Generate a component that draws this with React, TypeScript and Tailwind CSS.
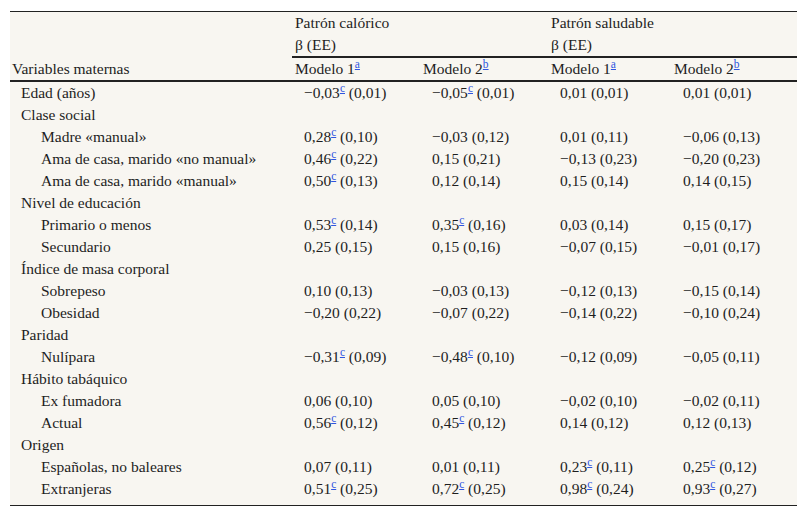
import React from "react";

type Row = { label: string; level: 0 | 1; vals?: string[] };

const rows: Row[] = [
  { label: "Edad (años)", level: 0, vals: ["−0,03^ (0,01)", "−0,05^ (0,01)", "0,01 (0,01)", "0,01 (0,01)"] },
  { label: "Clase social", level: 0 },
  { label: "Madre «manual»", level: 1, vals: ["0,28^ (0,10)", "−0,03 (0,12)", "0,01 (0,11)", "−0,06 (0,13)"] },
  { label: "Ama de casa, marido «no manual»", level: 1, vals: ["0,46^ (0,22)", "0,15 (0,21)", "−0,13 (0,23)", "−0,20 (0,23)"] },
  { label: "Ama de casa, marido «manual»", level: 1, vals: ["0,50^ (0,13)", "0,12 (0,14)", "0,15 (0,14)", "0,14 (0,15)"] },
  { label: "Nivel de educación", level: 0 },
  { label: "Primario o menos", level: 1, vals: ["0,53^ (0,14)", "0,35^ (0,16)", "0,03 (0,14)", "0,15 (0,17)"] },
  { label: "Secundario", level: 1, vals: ["0,25 (0,15)", "0,15 (0,16)", "−0,07 (0,15)", "−0,01 (0,17)"] },
  { label: "Índice de masa corporal", level: 0 },
  { label: "Sobrepeso", level: 1, vals: ["0,10 (0,13)", "−0,03 (0,13)", "−0,12 (0,13)", "−0,15 (0,14)"] },
  { label: "Obesidad", level: 1, vals: ["−0,20 (0,22)", "−0,07 (0,22)", "−0,14 (0,22)", "−0,10 (0,24)"] },
  { label: "Paridad", level: 0 },
  { label: "Nulípara", level: 1, vals: ["−0,31^ (0,09)", "−0,48^ (0,10)", "−0,12 (0,09)", "−0,05 (0,11)"] },
  { label: "Hábito tabáquico", level: 0 },
  { label: "Ex fumadora", level: 1, vals: ["0,06 (0,10)", "0,05 (0,10)", "−0,02 (0,10)", "−0,02 (0,11)"] },
  { label: "Actual", level: 1, vals: ["0,56^ (0,12)", "0,45^ (0,12)", "0,14 (0,12)", "0,12 (0,13)"] },
  { label: "Origen", level: 0 },
  { label: "Españolas, no baleares", level: 1, vals: ["0,07 (0,11)", "0,01 (0,11)", "0,23^ (0,11)", "0,25^ (0,12)"] },
  { label: "Extranjeras", level: 1, vals: ["0,51^ (0,25)", "0,72^ (0,25)", "0,98^ (0,24)", "0,93^ (0,27)"] },
];

function Sup({ t }: { t: string }) {
  return (
    <a href="#" className="relative -top-[6px] text-[11.5px] leading-none text-[#2f55e0] underline">
      {t}
    </a>
  );
}

function Val({ s }: { s: string }) {
  const parts = s.split("^");
  if (parts.length === 1) return <>{s}</>;
  return (
    <>
      {parts[0]}
      <Sup t="c" />
      {parts[1]}
    </>
  );
}

export default function App() {
  return (
    <div className="min-h-[517px] w-[807px] bg-white pl-[10px] pt-[11px] font-['Liberation_Serif','Times_New_Roman',serif] text-[#1e1e1e]">
      <div className="w-[787px] border-t border-b border-[#222] bg-[#f8f6f1] pb-[5px]">
        <table className="w-[787px] table-fixed border-collapse text-[15.5px] leading-[22px]">
          <colgroup>
            <col className="w-[282px]" />
            <col className="w-[128px]" />
            <col className="w-[128px]" />
            <col className="w-[123px]" />
            <col className="w-[126px]" />
          </colgroup>
          <thead>
            <tr>
              <th className="p-0"></th>
              <th colSpan={2} className="border-b-2 border-[#222] p-0 pl-[3px] text-left align-top font-normal">
                Patrón calórico
                <br />β (EE)
              </th>
              <th colSpan={2} className="border-b-2 border-[#222] p-0 pl-[3px] text-left align-top font-normal">
                Patrón saludable
                <br />β (EE)
              </th>
            </tr>
            <tr>
              <th className="border-b-2 border-[#222] p-0 pl-[2px] text-left align-bottom font-normal">Variables maternas</th>
              <th className="border-b-2 border-[#222] p-0 pl-[3px] text-left font-normal">
                Modelo 1<Sup t="a" />
              </th>
              <th className="border-b-2 border-[#222] p-0 pl-[3px] text-left font-normal">
                Modelo 2<Sup t="b" />
              </th>
              <th className="border-b-2 border-[#222] p-0 pl-[3px] text-left font-normal">
                Modelo 1<Sup t="a" />
              </th>
              <th className="border-b-2 border-[#222] p-0 pl-[3px] text-left font-normal">
                Modelo 2<Sup t="b" />
              </th>
            </tr>
          </thead>
          <tbody>
            {rows.map((r, i) => (
              <tr key={i}>
                <td className={`p-0 whitespace-nowrap ${r.level === 0 ? "pl-[11px]" : "pl-[31px]"}`}>{r.label}</td>
                {[0, 1, 2, 3].map((j) => (
                  <td key={j} className="p-0 pl-[12px] whitespace-nowrap">
                    {r.vals ? <Val s={r.vals[j]} /> : null}
                  </td>
                ))}
              </tr>
            ))}
          </tbody>
        </table>
      </div>
    </div>
  );
}
